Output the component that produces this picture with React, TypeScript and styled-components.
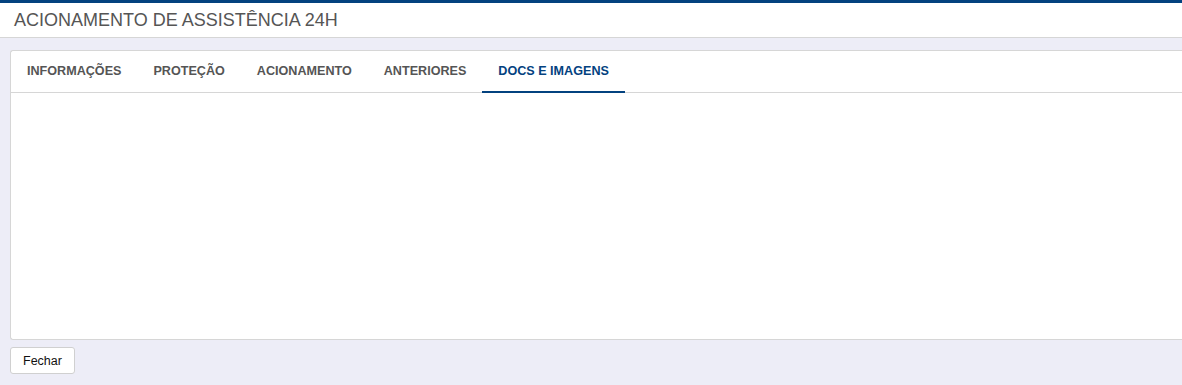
import React from 'react';
import styled, { createGlobalStyle } from 'styled-components';

const Global = createGlobalStyle`
  html, body { margin: 0; padding: 0; }
  body {
    background: #ededf7;
    font-family: 'Liberation Sans', Arial, sans-serif;
  }
`;

const Page = styled.div`
  min-height: 385px;
  display: flex;
  flex-direction: column;
  border-top: 3px solid #03427f;
  box-sizing: border-box;
`;

const Header = styled.header`
  background: #fff;
  height: 34px;
  border-bottom: 1px solid #d6d6d6;
  display: flex;
  align-items: center;
  padding: 0 14px;
`;

const Title = styled.h1`
  margin: 0;
  font-size: 18px;
  font-weight: 400;
  color: #555;
`;

const Body = styled.main`
  padding: 12px 0 0 10px;
  display: flex;
  flex-direction: column;
  gap: 7px;
`;

const Card = styled.section`
  background: #fff;
  border: 1px solid #d6d6d6;
  border-right: none;
  border-radius: 3px 0 0 3px;
  height: 290px;
  box-sizing: border-box;
`;

const Tabs = styled.nav`
  display: flex;
  height: 41px;
  border-bottom: 1px solid #d6d6d6;
`;

const Tab = styled.div<{ $active?: boolean }>`
  display: flex;
  align-items: center;
  padding: 0 16px;
  font-size: 12.6px;
  font-weight: 700;
  color: ${(p) => (p.$active ? '#03427f' : '#555')};
  border-bottom: 2px solid ${(p) => (p.$active ? '#03427f' : 'transparent')};
  margin-bottom: -1px;
`;

const Button = styled.button`
  align-self: flex-start;
  background: #fff;
  border: 1px solid #d0d0d0;
  border-radius: 3px;
  height: 27px;
  padding: 0 12px;
  font-family: 'Liberation Sans', Arial, sans-serif;
  font-size: 12.5px;
  color: #111;
  cursor: pointer;
`;

const tabs = ['INFORMAÇÕES', 'PROTEÇÃO', 'ACIONAMENTO', 'ANTERIORES', 'DOCS E IMAGENS'];

export default function App() {
  return (
    <Page>
      <Global />
      <Header>
        <Title>ACIONAMENTO DE ASSISTÊNCIA 24H</Title>
      </Header>
      <Body>
        <Card>
          <Tabs>
            {tabs.map((t) => (
              <Tab key={t} $active={t === 'DOCS E IMAGENS'}>
                {t}
              </Tab>
            ))}
          </Tabs>
        </Card>
        <Button>Fechar</Button>
      </Body>
    </Page>
  );
}
